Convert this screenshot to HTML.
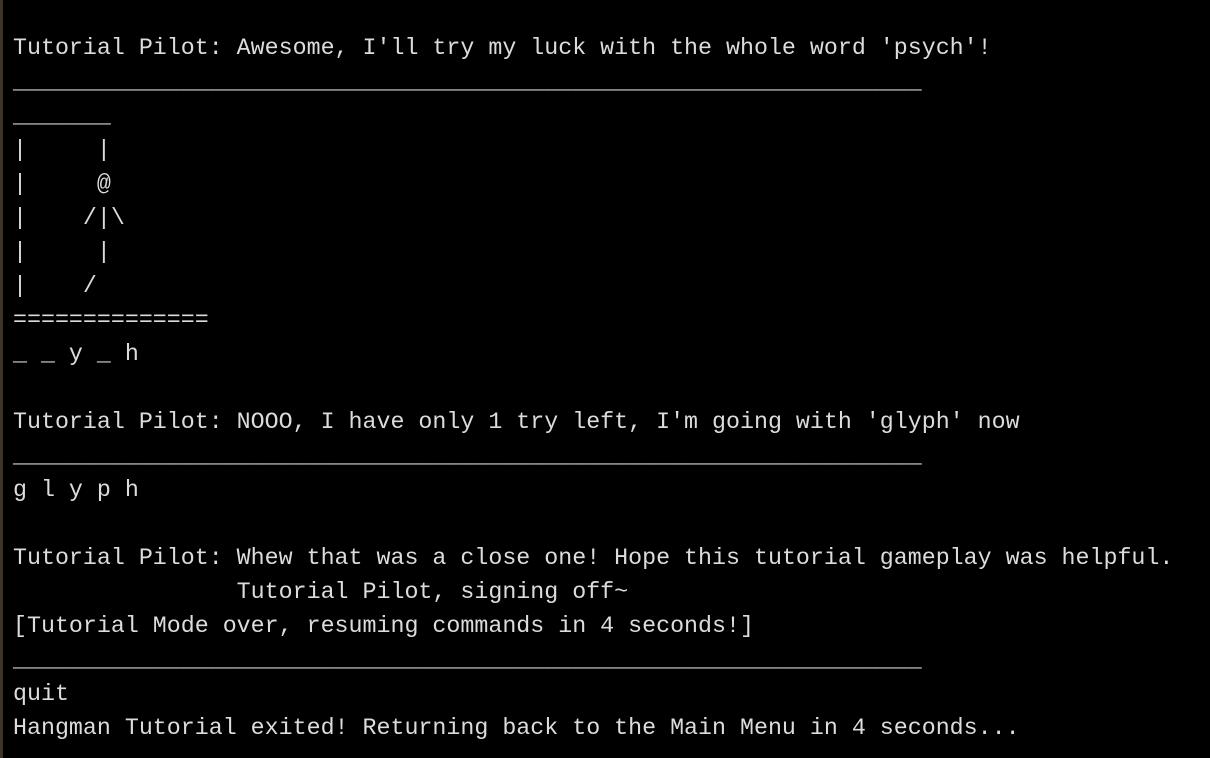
<!DOCTYPE html>
<html><head><meta charset="utf-8"><style>
html,body{margin:0;padding:0;background:#000;width:1210px;height:758px;overflow:hidden}
.b{position:absolute;left:0;top:0;width:3px;height:758px;background:#3a3528}
pre{position:absolute;left:13px;top:31px;margin:0;font-family:"Liberation Mono",monospace;font-size:23.3px;line-height:34px;color:#dcdcdc;white-space:pre}
</style></head><body><div class="b"></div><pre>Tutorial Pilot: Awesome, I'll try my luck with the whole word 'psych'!
_________________________________________________________________
_______
|     |
|     @
|    /|\
|     |
|    /
==============
_ _ y _ h

Tutorial Pilot: NOOO, I have only 1 try left, I'm going with 'glyph' now
_________________________________________________________________
g l y p h

Tutorial Pilot: Whew that was a close one! Hope this tutorial gameplay was helpful.
                Tutorial Pilot, signing off~
[Tutorial Mode over, resuming commands in 4 seconds!]
_________________________________________________________________
quit
Hangman Tutorial exited! Returning back to the Main Menu in 4 seconds...</pre></body></html>
